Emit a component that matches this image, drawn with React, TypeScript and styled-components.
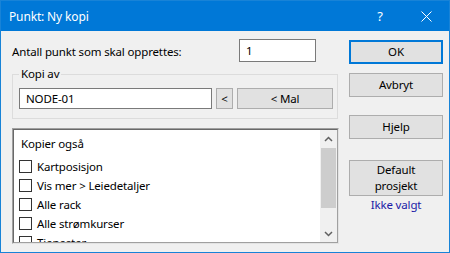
import React from 'react';
import styled, { createGlobalStyle } from 'styled-components';

const GlobalStyle = createGlobalStyle`
  html, body {
    margin: 0;
    padding: 0;
    background: #ffffff;
  }
  * {
    box-sizing: border-box;
  }
`;

const Window = styled.div`
  width: 450px;
  height: 253px;
  border: 1px solid #1883d7;
  background: #f0f0f0;
  display: flex;
  flex-direction: column;
  overflow: hidden;
  font-family: 'Segoe UI', 'Noto Sans', sans-serif;
  font-size: 11.5px;
  letter-spacing: -0.15px;
  color: #000;
`;

const TitleBar = styled.div`
  height: 30px;
  background: #0078d7;
  color: #fff;
  display: flex;
  align-items: center;
  padding-left: 8px;
  flex-shrink: 0;
  font-size: 12px;
`;

const Title = styled.div`
  flex: 1;
`;

const TitleButton = styled.div`
  width: 46px;
  height: 30px;
  display: flex;
  align-items: center;
  justify-content: center;
  font-size: 13px;
`;

const Body = styled.div`
  flex: 1;
  display: grid;
  grid-template-columns: 327px 94px;
  column-gap: 10px;
  padding-left: 11px;
`;

const LeftColumn = styled.div`
  display: flex;
  flex-direction: column;
`;

const CountRow = styled.div`
  margin-top: 8px;
  height: 23px;
  display: flex;
  align-items: center;
  padding-right: 23px;
`;

const Label = styled.span`
  flex: 1;
  padding-top: 1px;
`;

const TextBox = styled.div<{ $width?: number; $height: number }>`
  ${({ $width }) => ($width ? `width: ${$width}px;` : 'flex: 1;')}
  height: ${({ $height }) => $height}px;
  border: 1px solid #7a7a7a;
  background: #fff;
  display: flex;
  align-items: center;
  padding-left: 6px;
`;

const GroupBox = styled.fieldset`
  margin: 4px 1px 0 0;
  padding: 6px 4px 9px 6px;
  border: 1px solid #dcdcdc;
  min-width: 0;
`;

const Legend = styled.legend`
  padding: 0 2px;
  line-height: 16px;
`;

const CopyRow = styled.div`
  display: flex;
  gap: 4px;
  height: 21px;
`;

const Button = styled.div<{ $width?: number; $height?: number; $default?: boolean }>`
  ${({ $width }) => ($width ? `width: ${$width}px;` : '')}
  height: ${({ $height }) => $height ?? 24}px;
  background: #e1e1e1;
  border: ${({ $default }) => ($default ? '2px solid #0078d7' : '1px solid #adadad')};
  display: flex;
  align-items: center;
  justify-content: center;
  text-align: center;
  line-height: 16px;
  flex-shrink: 0;
`;

const ListBox = styled.div`
  margin-top: 9px;
  height: 116px;
  border: 1px solid #a0a0a0;
  border-right-color: #e3e3e3;
  border-bottom-color: #e3e3e3;
  display: flex;
  overflow: hidden;
`;

const ListInner = styled.div`
  flex: 1;
  display: flex;
  background: #fff;
  border: 1px solid #696969;
  border-right-color: #a0a0a0;
  border-bottom-color: #a0a0a0;
  overflow: hidden;
`;

const ListContent = styled.div`
  flex: 1;
  padding: 4px 0 0 5px;
  overflow: hidden;
`;

const ListHeader = styled.div`
  height: 19px;
  line-height: 19px;
  padding-left: 2px;
  margin-bottom: 4px;
`;

const CheckRow = styled.div`
  height: 19px;
  display: flex;
  align-items: center;
  gap: 5px;
`;

const CheckBox = styled.span`
  width: 13px;
  height: 13px;
  border: 1px solid #333;
  background: #fff;
  flex-shrink: 0;
`;

const ScrollBar = styled.div`
  width: 17px;
  background: #f0f0f0;
  display: flex;
  flex-direction: column;
`;

const ScrollArrow = styled.div`
  height: 17px;
  display: flex;
  align-items: center;
  justify-content: center;
`;

const ScrollTrack = styled.div`
  flex: 1;
  padding: 1px 1px 0;
`;

const ScrollThumb = styled.div`
  height: 60px;
  background: #cdcdcd;
`;

const RightColumn = styled.div`
  display: flex;
  flex-direction: column;
  padding-top: 9px;
`;

const Spacer = styled.div<{ $h: number }>`
  height: ${({ $h }) => $h}px;
  flex-shrink: 0;
`;

const Status = styled.div`
  text-align: center;
  color: #1a1aa6;
  margin-top: 1px;
  line-height: 16px;
`;

const options = ['Kartposisjon', 'Vis mer > Leiedetaljer', 'Alle rack', 'Alle strømkurser', 'Tjenester'];

const Chevron = ({ up }: { up?: boolean }) => (
  <svg width="9" height="6" viewBox="0 0 9 6">
    <path
      d={up ? 'M1 5 L4.5 1.5 L8 5' : 'M1 1 L4.5 4.5 L8 1'}
      stroke="#606060"
      strokeWidth="1.5"
      fill="none"
    />
  </svg>
);

export default function App() {
  return (
    <>
      <GlobalStyle />
      <Window>
        <TitleBar>
          <Title>Punkt: Ny kopi</Title>
          <TitleButton>?</TitleButton>
          <TitleButton>
            <svg width="11" height="11" viewBox="0 0 11 11">
              <path d="M0.5 0.5 L10.5 10.5 M10.5 0.5 L0.5 10.5" stroke="#fff" strokeWidth="1" />
            </svg>
          </TitleButton>
        </TitleBar>
        <Body>
          <LeftColumn>
            <CountRow>
              <Label>Antall punkt som skal opprettes:</Label>
              <TextBox $width={77} $height={23}>1</TextBox>
            </CountRow>
            <GroupBox>
              <Legend>Kopi av</Legend>
              <CopyRow>
                <TextBox $height={21}>NODE-01</TextBox>
                <Button $width={17} $height={21}>&lt;</Button>
                <Button $width={96} $height={21}>&lt; Mal</Button>
              </CopyRow>
            </GroupBox>
            <ListBox>
              <ListInner>
                <ListContent>
                  <ListHeader>Kopier også</ListHeader>
                  {options.map((o) => (
                    <CheckRow key={o}>
                      <CheckBox />
                      <span>{o}</span>
                    </CheckRow>
                  ))}
                </ListContent>
                <ScrollBar>
                  <ScrollArrow>
                    <Chevron up />
                  </ScrollArrow>
                  <ScrollTrack>
                    <ScrollThumb />
                  </ScrollTrack>
                  <ScrollArrow>
                    <Chevron />
                  </ScrollArrow>
                </ScrollBar>
              </ListInner>
            </ListBox>
          </LeftColumn>
          <RightColumn>
            <Button $default>OK</Button>
            <Spacer $h={9} />
            <Button>Avbryt</Button>
            <Spacer $h={18} />
            <Button>Hjelp</Button>
            <Spacer $h={21} />
            <Button $height={36}>
              Default
              <br />
              prosjekt
            </Button>
            <Status>Ikke valgt</Status>
          </RightColumn>
        </Body>
      </Window>
    </>
  );
}
